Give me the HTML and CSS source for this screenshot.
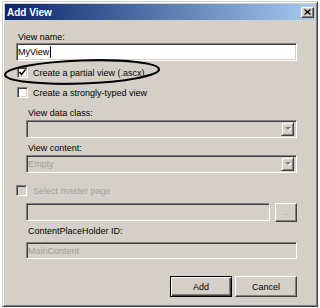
FILE: index.html
```html
<!DOCTYPE html>
<html lang="en">
<head>
    <meta charset="UTF-8">
    <title>Add View</title>
    <link rel="stylesheet" href="styles.css">
</head>
<body>
    <div class="window">
        <div class="titlebar">
            <span class="title">Add View</span>
            <span class="close">
                <svg width="7" height="6" viewBox="0 0 7 6"><path d="M0.5 0.5 L6.5 5.5 M6.5 0.5 L0.5 5.5" stroke="#000" stroke-width="1.4"/></svg>
            </span>
        </div>
        <div class="dialog">
            <div class="label name-label">View name:</div>
            <div class="field name-field"><span class="value">MyView</span><span class="caret"></span></div>

            <div class="check partial">
                <span class="box">
                    <svg width="9" height="9" viewBox="0 0 9 9"><path d="M1.5 4 L3.5 6.5 L7.5 1.5" fill="none" stroke="#000" stroke-width="1.5"/></svg>
                </span>
                <span>Create a partial view (.ascx)</span>
            </div>
            <div class="check typed">
                <span class="box"></span>
                <span>Create a strongly-typed view</span>
            </div>

            <div class="group">
                <div class="label data-label">View data class:</div>
                <div class="field combo disabled data-combo"><span class="value"></span><span class="arrow"></span></div>
                <div class="label content-label">View content:</div>
                <div class="field combo disabled content-combo"><span class="value">Empty</span><span class="arrow"></span></div>
            </div>

            <div class="check master disabled-text">
                <span class="box off"></span>
                <span>Select master page</span>
            </div>

            <div class="group">
                <div class="master-row">
                    <div class="field disabled master-field"></div>
                    <span class="btn browse">...</span>
                </div>
                <div class="label holder-label">ContentPlaceHolder ID:</div>
                <div class="field disabled holder-field"><span class="value">MainContent</span></div>
            </div>

            <div class="actions">
                <span class="btn default">Add</span>
                <span class="btn">Cancel</span>
            </div>
        </div>
    </div>

    <!-- hand drawn mark over the first checkbox -->
    <svg class="annotation" width="320" height="308" viewBox="0 0 320 308">
        <ellipse cx="82" cy="72" rx="77" ry="11.5" transform="rotate(-2 82 72)" fill="none" stroke="#000" stroke-width="2.2"/>
    </svg>
</body>
</html>
```

FILE: styles.css
```css
body {
    margin: 0;
    background-color: #fff;
    font-family: "Liberation Sans", Arial, sans-serif;
    font-size: 9px;
    color: #000;
    position: relative;
    width: 320px;
    height: 308px;
    overflow: hidden;
}
.window {
    margin: 1px 0 0 2px;
    width: 316px;
    height: 306px;
    box-sizing: border-box;
    background-color: #d4d0c8;
    border: 1px solid;
    border-color: #d4d0c8 #404040 #404040 #d4d0c8;
    box-shadow: inset 1px 1px 0 #fff, inset -1px -1px 0 #808080;
    padding: 2px;
}
.titlebar {
    height: 16px;
    display: flex;
    align-items: center;
    justify-content: space-between;
    padding: 0 1px 0 2px;
    background: linear-gradient(to right, #0a246a, #a6caf0);
}
.title {
    color: #fff;
    font-weight: bold;
    font-size: 10px;
}
.close {
    width: 13px;
    height: 11px;
    box-sizing: border-box;
    background-color: #d4d0c8;
    border: 1px solid;
    border-color: #fff #404040 #404040 #fff;
    box-shadow: inset -1px -1px 0 #808080;
    display: flex;
    align-items: center;
    justify-content: center;
}
.dialog {
    padding: 0 18px 0 11px;
}
.group {
    padding-left: 10px;
}
.label {
    line-height: 12px;
    padding-left: 2px;
}
.name-label { margin-top: 11px; }
.data-label { margin-top: 8px; }
.content-label { margin-top: 4px; }
.holder-label { margin-top: 3px; }

.field {
    height: 18px;
    box-sizing: border-box;
    background-color: #fff;
    border: 1px solid;
    border-color: #808080 #fff #fff #808080;
    box-shadow: inset 1px 1px 0 #404040, inset -1px -1px 0 #d4d0c8;
    display: flex;
    align-items: center;
    padding: 0 2px 0 1px;
}
.field.disabled {
    background-color: #d4d0c8;
    color: #a0a0a0;
}
.name-field { margin-top: 0; }
.caret {
    width: 1px;
    height: 12px;
    margin-left: 1px;
    background-color: #000;
}
.combo {
    justify-content: space-between;
}
.data-combo { margin-top: 1px; }
.content-combo { margin-top: 1px; }
.arrow {
    width: 13px;
    height: 14px;
    box-sizing: border-box;
    background-color: #d4d0c8;
    border: 1px solid;
    border-color: #d4d0c8 #404040 #404040 #d4d0c8;
    box-shadow: inset 1px 1px 0 #fff, inset -1px -1px 0 #808080;
    position: relative;
}
.arrow::after {
    content: "";
    position: absolute;
    left: 3px;
    top: 4px;
    border-left: 3px solid transparent;
    border-right: 3px solid transparent;
    border-top: 3px solid #808080;
    filter: drop-shadow(1px 1px 0 #fff);
}

.check {
    display: flex;
    align-items: center;
    height: 13px;
    padding-left: 1px;
}
.check .box {
    width: 11px;
    height: 11px;
    box-sizing: border-box;
    margin-right: 5px;
    background-color: #fff;
    border: 1px solid;
    border-color: #808080 #fff #fff #808080;
    box-shadow: inset 1px 1px 0 #404040, inset -1px -1px 0 #d4d0c8;
    display: flex;
    align-items: center;
    justify-content: center;
}
.check .box.off {
    background-color: #d4d0c8;
}
.partial { margin-top: 5px; }
.typed { margin-top: 7px; }
.master {
    margin-top: 11px;
    padding-left: 0;
}
.master .box { margin-right: 6px; }
.disabled-text { color: #a0a0a0; }

.master-row {
    display: flex;
    gap: 5px;
    margin-top: 6px;
}
.master-field {
    flex: 1;
    height: 18px;
}
.btn {
    box-sizing: border-box;
    background-color: #d4d0c8;
    border: 1px solid;
    border-color: #fff #404040 #404040 #fff;
    box-shadow: inset -1px -1px 0 #808080;
    display: flex;
    align-items: center;
    justify-content: center;
}
.browse {
    width: 22px;
    height: 19px;
    color: #a0a0a0;
    font-size: 8px;
}
.holder-field {
    margin-top: 5px;
    height: 17px;
}
.actions {
    display: flex;
    justify-content: flex-end;
    gap: 3px;
    margin-top: 17px;
}
.actions .btn {
    width: 62px;
    height: 21px;
}
.btn.default {
    border-color: #000;
    box-shadow: inset 1px 1px 0 #fff, inset -1px -1px 0 #404040, inset -2px -2px 0 #808080;
}
.annotation {
    position: absolute;
    left: 0;
    top: 0;
    pointer-events: none;
}
```
